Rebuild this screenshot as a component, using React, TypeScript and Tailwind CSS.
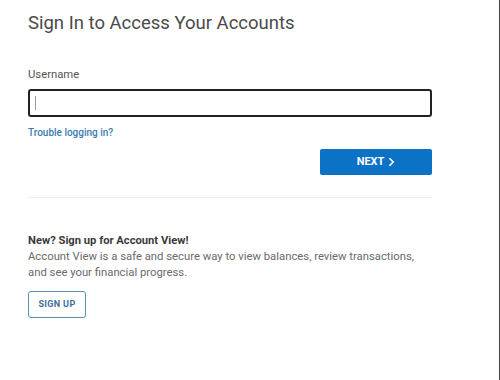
import React from "react";

export default function App() {
  return (
    <div
      className="h-[380px] w-[500px] border-r border-[#444] bg-white"
      style={{ fontFamily: "Roboto, 'Liberation Sans', sans-serif" }}
    >
      <div className="w-[432px] pl-[28px] pt-[9px]">
        <h1 className="text-[18.5px] leading-[28px] text-[#4a4a4a]">Sign In to Access Your Accounts</h1>

        <label className="mt-[30px] block text-[11.3px] leading-4 text-[#555]">Username</label>
        <div className="mt-[6px] flex h-[28px] items-center rounded-[3px] border-2 border-[#222] px-[5px]">
          <span className="h-[14px] w-px bg-[#999]" />
        </div>

        <a className="mt-2 block text-[10px] font-medium leading-4 text-[#3b7bb3]">Trouble logging in?</a>

        <div className="mt-2 flex justify-end">
          <button className="flex h-[26px] w-[112px] items-center justify-center gap-1 rounded-[2px] bg-[#0b72c6] text-[11px] font-bold text-white">
            NEXT
            <svg viewBox="0 0 8 12" className="h-[10px] w-[7px]" fill="none" stroke="currentColor" strokeWidth="2">
              <path d="M1.5 1.5 6 6l-4.5 4.5" />
            </svg>
          </button>
        </div>

        <div className="mt-[22px] h-px bg-[#ececec]" />

        <h2 className="mt-[35px] text-[11.2px] font-bold leading-4 text-[#3a3a3a]">New? Sign up for Account View!</h2>
        <p className="text-[11.3px] leading-4 text-[#6a6a6a]">
          Account View is a safe and secure way to view balances, review transactions, and see your financial progress.
        </p>

        <button className="mt-[10px] flex h-[27px] w-[58px] items-center justify-center rounded-[3px] border border-[#5d8fab] text-[9px] font-bold tracking-[0.04em] text-[#3d6f99]">
          SIGN UP
        </button>
      </div>
    </div>
  );
}
